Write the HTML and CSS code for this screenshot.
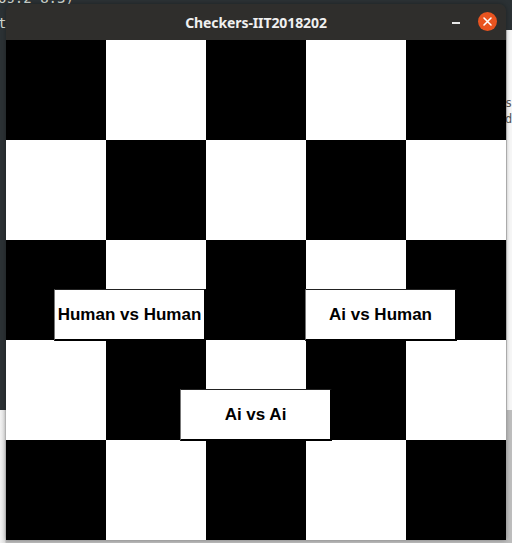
FILE: index.html
```html
<!DOCTYPE html>
<html>
<head>
<meta charset="utf-8">
<link rel="stylesheet" href="styles.css">
</head>
<body>
<div class="desktop">
  <div class="term-left"></div>
  <div class="term-top"></div>
  <div class="light-right"></div>
  <div class="light-bottom"></div>
  <span class="frag f1">os.2 8.3)</span>
  <span class="frag f2">t</span>
  <span class="frag f3">s</span>
  <span class="frag f4">d</span>

  <div class="window">
    <div class="titlebar">
      <span class="title">Checkers-IIT2018202</span>
      <span class="minimize"></span>
      <span class="close">
        <svg width="19" height="19" viewBox="0 0 19 19">
          <circle cx="9.5" cy="9.5" r="9.5" fill="#e95420"/>
          <path d="M6 6 L13 13 M13 6 L6 13" stroke="#fff" stroke-width="1.6" stroke-linecap="round"/>
        </svg>
      </span>
    </div>
    <div class="board">
      <div class="sq b"></div><div class="sq w"></div><div class="sq b"></div><div class="sq w"></div><div class="sq b"></div>
      <div class="sq w"></div><div class="sq b"></div><div class="sq w"></div><div class="sq b"></div><div class="sq w"></div>
      <div class="sq b"></div><div class="sq w"></div><div class="sq b"></div><div class="sq w"></div><div class="sq b"></div>
      <div class="sq w"></div><div class="sq b"></div><div class="sq w"></div><div class="sq b"></div><div class="sq w"></div>
      <div class="sq b"></div><div class="sq w"></div><div class="sq b"></div><div class="sq w"></div><div class="sq b"></div>
      <button class="btn btn-hh">Human vs Human</button>
      <button class="btn btn-ah">Ai vs Human</button>
      <button class="btn btn-aa">Ai vs Ai</button>
    </div>
  </div>
</div>
</body>
</html>
```

FILE: styles.css
```css
html, body {
  margin: 0;
  padding: 0;
  width: 512px;
  height: 543px;
  overflow: hidden;
}

.desktop {
  position: relative;
  width: 512px;
  height: 543px;
  background: #ececec;
  overflow: hidden;
}

.term-left {
  position: absolute;
  left: 0;
  top: 0;
  width: 20px;
  height: 410px;
  background: #2b3134;
}

.term-top {
  position: absolute;
  left: 0;
  top: 0;
  width: 512px;
  height: 30px;
  background: #2b3134;
}

.light-right {
  position: absolute;
  left: 505px;
  top: 30px;
  width: 7px;
  height: 513px;
  background: #f6f6f6;
  border-left: 2px solid #c8c8c8;
}

.light-bottom {
  position: absolute;
  left: 0;
  top: 410px;
  width: 512px;
  height: 133px;
  background: linear-gradient(to right, #f2f2f2 0, #e0e0e0 5px, #bdbdbd 6px);
}

.frag {
  position: absolute;
  font-family: "DejaVu Sans Mono", monospace;
  font-size: 14px;
  color: #d3d7cf;
  line-height: 16px;
}

.f1 { left: -2px; top: -10px; }
.f2 { left: -2px; top: 15px; }
.f3 { left: 505px; top: 97px; color: #555; font-size: 12px; line-height: 12px; }
.f4 { left: 505px; top: 113px; color: #555; font-size: 12px; line-height: 12px; }

.window {
  position: absolute;
  left: 6px;
  top: 4px;
  width: 500px;
  box-shadow: 0 0 4px rgba(0,0,0,0.35);
  border-radius: 7px 7px 0 0;
  display: flex;
  flex-direction: column;
}

.titlebar {
  position: relative;
  height: 36px;
  background: #2f2e2c;
  border-radius: 7px 7px 0 0;
  display: flex;
  align-items: center;
  justify-content: center;
}

.title {
  font-family: "Noto Sans", "DejaVu Sans", sans-serif;
  font-weight: bold;
  font-size: 14px;
  color: #f0f0f0;
  letter-spacing: -0.1px;
}

.minimize {
  position: absolute;
  left: 446px;
  top: 18px;
  width: 8px;
  height: 2px;
  background: #e8e8e8;
}

.close {
  position: absolute;
  left: 472px;
  top: 8px;
  width: 19px;
  height: 19px;
  display: block;
}

.close svg { display: block; }

.board {
  position: relative;
  display: grid;
  grid-template-columns: repeat(5, 100px);
  grid-template-rows: repeat(5, 100px);
}

.sq.b { background: #000; }
.sq.w { background: #fff; }

.btn {
  position: absolute;
  width: 152px;
  height: 52px;
  margin: 0;
  padding: 0;
  background: #fff;
  border-top: 1px solid #222;
  border-left: 1px solid #777;
  border-right: 2px solid #000;
  border-bottom: 2px solid #000;
  font-family: "Liberation Sans", Arial, sans-serif;
  font-weight: bold;
  font-size: 17px;
  color: #000;
  text-align: center;
}

.btn-hh { left: 48px; top: 249px; }
.btn-ah { left: 299px; top: 249px; }
.btn-aa { left: 174px; top: 349px; }
```
